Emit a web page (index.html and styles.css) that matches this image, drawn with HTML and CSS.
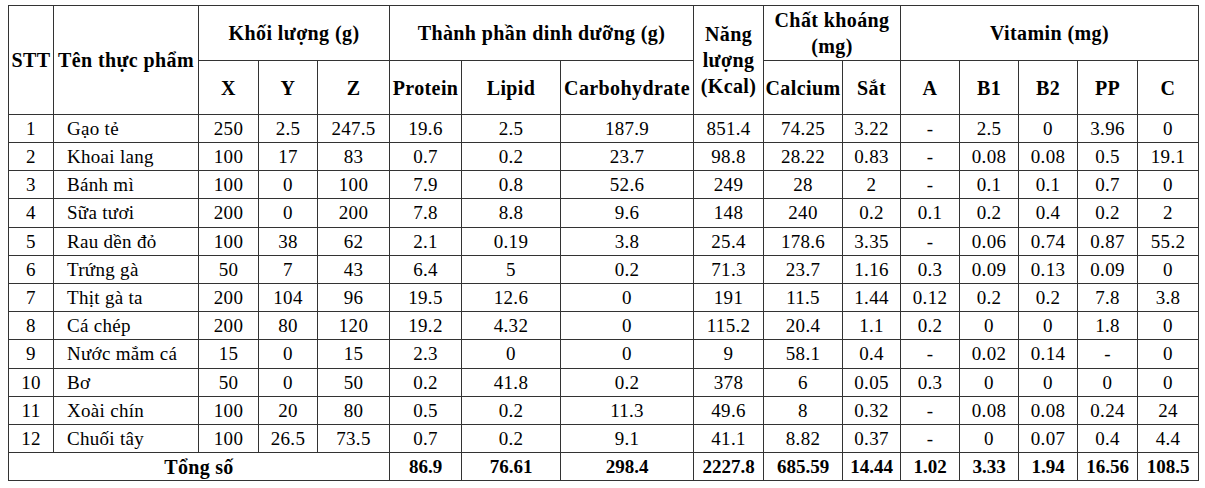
FILE: index.html
```html
<!DOCTYPE html>
<html lang="vi">
<head>
<meta charset="utf-8">
<title>Bảng thành phần dinh dưỡng</title>
<link rel="stylesheet" href="styles.css">
</head>
<body>
<table class="nutri">
  <colgroup>
    <col class="c-stt"><col class="c-name"><col class="c-x"><col class="c-y"><col class="c-z">
    <col class="c-pro"><col class="c-lip"><col class="c-carb"><col class="c-kcal">
    <col class="c-ca"><col class="c-fe"><col class="c-a"><col class="c-b1"><col class="c-b2"><col class="c-pp"><col class="c-c">
  </colgroup>
  <thead>
    <tr class="h1">
      <th rowspan="2">STT</th>
      <th rowspan="2">Tên thực phẩm</th>
      <th colspan="3">Khối lượng (g)</th>
      <th colspan="3">Thành phần dinh dưỡng (g)</th>
      <th rowspan="2" class="kcal">Năng lượng (Kcal)</th>
      <th colspan="2" class="mineral">Chất khoáng<br>(mg)</th>
      <th colspan="5">Vitamin (mg)</th>
    </tr>
    <tr class="h2">
      <th>X</th><th>Y</th><th>Z</th>
      <th>Protein</th><th>Lipid</th><th>Carbohydrate</th>
      <th>Calcium</th><th>Sắt</th>
      <th>A</th><th>B1</th><th>B2</th><th>PP</th><th>C</th>
    </tr>
  </thead>
  <tbody>
    <tr><td>1</td><td class="name">Gạo tẻ</td><td>250</td><td>2.5</td><td>247.5</td><td>19.6</td><td>2.5</td><td>187.9</td><td>851.4</td><td>74.25</td><td>3.22</td><td>-</td><td>2.5</td><td>0</td><td>3.96</td><td>0</td></tr>
    <tr><td>2</td><td class="name">Khoai lang</td><td>100</td><td>17</td><td>83</td><td>0.7</td><td>0.2</td><td>23.7</td><td>98.8</td><td>28.22</td><td>0.83</td><td>-</td><td>0.08</td><td>0.08</td><td>0.5</td><td>19.1</td></tr>
    <tr><td>3</td><td class="name">Bánh mì</td><td>100</td><td>0</td><td>100</td><td>7.9</td><td>0.8</td><td>52.6</td><td>249</td><td>28</td><td>2</td><td>-</td><td>0.1</td><td>0.1</td><td>0.7</td><td>0</td></tr>
    <tr class="tall"><td>4</td><td class="name">Sữa tươi</td><td>200</td><td>0</td><td>200</td><td>7.8</td><td>8.8</td><td>9.6</td><td>148</td><td>240</td><td>0.2</td><td>0.1</td><td>0.2</td><td>0.4</td><td>0.2</td><td>2</td></tr>
    <tr><td>5</td><td class="name">Rau dền đỏ</td><td>100</td><td>38</td><td>62</td><td>2.1</td><td>0.19</td><td>3.8</td><td>25.4</td><td>178.6</td><td>3.35</td><td>-</td><td>0.06</td><td>0.74</td><td>0.87</td><td>55.2</td></tr>
    <tr><td>6</td><td class="name">Trứng gà</td><td>50</td><td>7</td><td>43</td><td>6.4</td><td>5</td><td>0.2</td><td>71.3</td><td>23.7</td><td>1.16</td><td>0.3</td><td>0.09</td><td>0.13</td><td>0.09</td><td>0</td></tr>
    <tr><td>7</td><td class="name">Thịt gà ta</td><td>200</td><td>104</td><td>96</td><td>19.5</td><td>12.6</td><td>0</td><td>191</td><td>11.5</td><td>1.44</td><td>0.12</td><td>0.2</td><td>0.2</td><td>7.8</td><td>3.8</td></tr>
    <tr><td>8</td><td class="name">Cá chép</td><td>200</td><td>80</td><td>120</td><td>19.2</td><td>4.32</td><td>0</td><td>115.2</td><td>20.4</td><td>1.1</td><td>0.2</td><td>0</td><td>0</td><td>1.8</td><td>0</td></tr>
    <tr class="tall"><td>9</td><td class="name">Nước mắm cá</td><td>15</td><td>0</td><td>15</td><td>2.3</td><td>0</td><td>0</td><td>9</td><td>58.1</td><td>0.4</td><td>-</td><td>0.02</td><td>0.14</td><td>-</td><td>0</td></tr>
    <tr><td>10</td><td class="name">Bơ</td><td>50</td><td>0</td><td>50</td><td>0.2</td><td>41.8</td><td>0.2</td><td>378</td><td>6</td><td>0.05</td><td>0.3</td><td>0</td><td>0</td><td>0</td><td>0</td></tr>
    <tr><td>11</td><td class="name">Xoài chín</td><td>100</td><td>20</td><td>80</td><td>0.5</td><td>0.2</td><td>11.3</td><td>49.6</td><td>8</td><td>0.32</td><td>-</td><td>0.08</td><td>0.08</td><td>0.24</td><td>24</td></tr>
    <tr><td>12</td><td class="name">Chuối tây</td><td>100</td><td>26.5</td><td>73.5</td><td>0.7</td><td>0.2</td><td>9.1</td><td>41.1</td><td>8.82</td><td>0.37</td><td>-</td><td>0</td><td>0.07</td><td>0.4</td><td>4.4</td></tr>
    <tr class="total"><td colspan="5" class="label">Tổng số</td><td>86.9</td><td>76.61</td><td>298.4</td><td>2227.8</td><td>685.59</td><td>14.44</td><td>1.02</td><td>3.33</td><td>1.94</td><td>16.56</td><td>108.5</td></tr>
  </tbody>
</table>
</body>
</html>
```

FILE: styles.css
```css
html, body {
  background: #ffffff;
}
body {
  margin: 5px 0 0 8px;
  font-family: "Liberation Serif", "Tinos", "Times New Roman", "DejaVu Serif", serif;
  color: #000;
}
.nutri {
  border-collapse: collapse;
  table-layout: fixed;
  width: 1191px;
  font-family: "Liberation Serif", "Tinos", "Times New Roman", "DejaVu Serif", serif;
}
.nutri th, .nutri td {
  border: 1px solid #333;
  padding: 0 1px;
  text-align: center;
  vertical-align: middle;
  overflow: hidden;
  white-space: nowrap;
  font-family: "Liberation Serif", "Tinos", "Times New Roman", "DejaVu Serif", serif;
}
.nutri th {
  font-weight: bold;
  font-size: 20px;
  letter-spacing: 0.4px;
  line-height: 26px;
}
.nutri th.kcal { white-space: normal; }
.nutri td {
  font-size: 19px;
  letter-spacing: 0.3px;
  line-height: 22px;
}
.nutri td.name {
  text-align: left;
  padding-left: 13px;
}
.nutri .h1 { height: 55px; }
.nutri .h2 { height: 54px; }
.nutri tbody tr { height: 28px; }
.nutri tbody tr.tall { height: 29px; }
.nutri tr.total td {
  font-weight: bold;
  font-size: 19px;
  letter-spacing: 0;
}
.nutri tr.total td.label {
  font-size: 20px;
  letter-spacing: 0.3px;
}

.c-stt { width: 45px; }
.c-name { width: 145px; }
.c-x { width: 60px; }
.c-y { width: 59px; }
.c-z { width: 72px; }
.c-pro { width: 72px; }
.c-lip { width: 99px; }
.c-carb { width: 133px; }
.c-kcal { width: 70px; }
.c-ca { width: 79px; }
.c-fe { width: 58px; }
.c-a { width: 59px; }
.c-b1 { width: 59px; }
.c-b2 { width: 59px; }
.c-pp { width: 60px; }
.c-c { width: 61px; }
```
